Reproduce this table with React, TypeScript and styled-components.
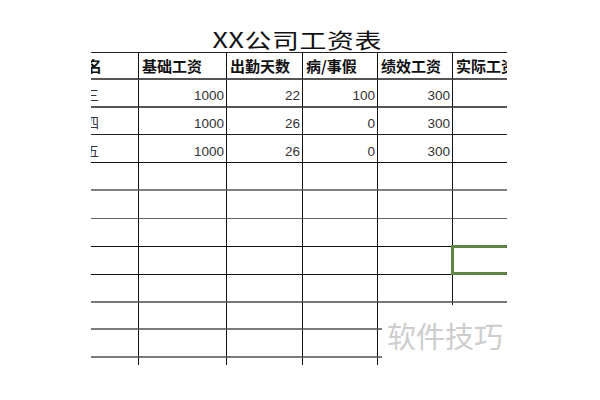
import React from "react";
import styled, { createGlobalStyle } from "styled-components";

const Global = createGlobalStyle`
  html, body { margin: 0; padding: 0; background: #fff; }
  body { font-family: "Liberation Sans", "Noto Sans CJK SC", sans-serif; }
`;

const Page = styled.div`
  position: relative;
  width: 600px;
  height: 400px;
  overflow: hidden;
  background: #fff;
  display: flex;
  flex-direction: column;
`;

const TitleBar = styled.div`
  height: 52px;
  box-sizing: border-box;
  display: flex;
  justify-content: center;
  align-items: flex-end;
  padding: 0 6px 2px 0;
`;

const Title = styled.h1`
  margin: 0;
  font: 400 21px/22px "Noto Sans CJK SC", sans-serif;
  letter-spacing: 0.5px;
  color: #111;
  transform: scaleX(1.28);
  transform-origin: center bottom;
`;

const Viewport = styled.div`
  margin-left: 91px;
  width: 416px;
  height: 313px;
  overflow: hidden;
`;

const Grid = styled.div`
  margin-left: -22px;
  display: grid;
  grid-template-columns: 70px 88px 76px 75px 75px 120px;
  grid-template-rows: 28px 28px 27px 28px 28px 28px 28px 28px 28px 27px 28px 28px;
`;

type Line = { c: string; w: number };

const Cell = styled.div<{
  $line: Line;
  $top?: boolean;
  $num?: boolean;
  $head?: boolean;
  $selected?: boolean;
}>`
  position: relative;
  box-sizing: border-box;
  border-right: 1px solid #111;
  border-bottom: ${(p) => p.$line.w}px solid ${(p) => p.$line.c};
  ${(p) => (p.$top ? "border-top: 1px solid #222;" : "")}
  display: flex;
  align-items: ${(p) => (p.$head ? "center" : "flex-end")};
  justify-content: ${(p) => (p.$num ? "flex-end" : "flex-start")};
  padding: ${(p) => (p.$head ? "0 2px 0 3px" : "0 2px 2px 3px")};
  white-space: nowrap;
  color: ${(p) => (p.$head ? "#111" : "#333")};
  font-size: ${(p) => (p.$head ? "15px" : "13.5px")};
  font-weight: ${(p) => (p.$head ? 700 : 400)};
  font-family: ${(p) =>
    p.$head
      ? `"Noto Sans CJK SC", sans-serif`
      : `"Liberation Sans", "Noto Sans CJK SC", sans-serif`};
  line-height: 16px;
  ${(p) =>
    p.$selected
      ? `&::after {
          content: "";
          position: absolute;
          top: -2px;
          left: -2px;
          right: 0;
          bottom: -1px;
          border: 3px solid #5f8443;
          border-right: none;
        }`
      : ""}
`;

const Watermark = styled.div`
  position: absolute;
  left: 382px;
  top: 305px;
  right: 0;
  bottom: 0;
  background: #fff;
  box-sizing: border-box;
  padding: 16px 0 0 5px;
  font: 400 29px/1 "Noto Sans CJK SC", sans-serif;
  color: #cdcdcd;
`;

const headers = ["姓名", "基础工资", "出勤天数", "病/事假", "绩效工资", "实际工资"];

const data: (string | number)[][] = [
  ["张三", 1000, 22, 100, 300, ""],
  ["李四", 1000, 26, 0, 300, ""],
  ["王五", 1000, 26, 0, 300, ""],
];

const totalRows = 11;

const lines: Line[] = [
  { c: "#555", w: 2 },
  { c: "#555", w: 2 },
  { c: "#222", w: 1 },
  { c: "#111", w: 1 },
  { c: "#808080", w: 2 },
  { c: "#666", w: 1 },
  { c: "#111", w: 1 },
  { c: "#111", w: 1 },
  { c: "#777", w: 2 },
  { c: "#7a7a7a", w: 2 },
  { c: "#7a7a7a", w: 2 },
  { c: "#111", w: 1 },
];

export default function App() {
  const bodyRows: (string | number)[][] = [];
  for (let i = 0; i < totalRows; i++) {
    bodyRows.push(data[i] ?? ["", "", "", "", "", ""]);
  }
  return (
    <Page>
      <Global />
      <TitleBar>
        <Title>XX公司工资表</Title>
      </TitleBar>
      <Viewport>
        <Grid>
          {headers.map((h) => (
            <Cell key={h} $line={lines[0]} $top $head>
              {h}
            </Cell>
          ))}
          {bodyRows.map((row, r) =>
            row.map((v, c) => (
              <Cell
                key={`${r}-${c}`}
                $line={lines[r + 1]}
                $num={typeof v === "number"}
                $selected={r === 6 && c === 5}
              >
                {v}
              </Cell>
            ))
          )}
        </Grid>
      </Viewport>
      <Watermark>软件技巧</Watermark>
    </Page>
  );
}
